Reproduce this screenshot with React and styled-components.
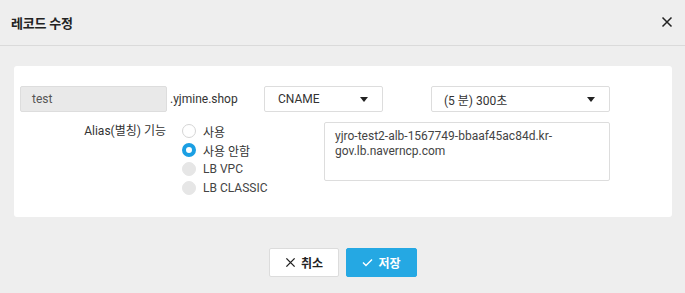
import React, { useState } from "react";
import styled, { createGlobalStyle } from "styled-components";

const Global = createGlobalStyle`
  html, body {
    margin: 0;
    padding: 0;
    background: #eeeeee;
  }
  body {
    font-family: Roboto, "Noto Sans CJK KR", "Noto Sans", sans-serif;
    color: #333;
  }
  * { box-sizing: border-box; }
`;

const Modal = styled.div`
  width: 685px;
  height: 293px;
  background: #eeeeee;
  display: flex;
  flex-direction: column;
`;

const Header = styled.div`
  height: 46px;
  padding: 0 12px 1px 11px;
  border-bottom: 1px solid #dadada;
  display: flex;
  align-items: center;
  justify-content: space-between;
`;

const Title = styled.h2`
  margin: 0;
  font-size: 13px;
  font-weight: 700;
  color: #222;
  letter-spacing: -0.2px;
`;

const CloseBtn = styled.button`
  border: 0;
  background: none;
  padding: 0;
  width: 12px;
  height: 12px;
  display: flex;
  align-items: center;
  justify-content: center;
  cursor: pointer;
`;

const Body = styled.div`
  padding: 20px 13px 0 14px;
`;

const Card = styled.div`
  background: #fff;
  border-radius: 3px;
  height: 151px;
  padding: 20px 6px 0 6px;
  display: flex;
  flex-direction: column;
  gap: 10px;
`;

const Row = styled.div`
  display: flex;
  align-items: ${(p) => p.align || "center"};
`;

const TextInput = styled.div`
  width: 147px;
  height: 26px;
  background: #e9e9e9;
  border: 1px solid #dddddd;
  border-radius: 2px;
  padding-left: 11px;
  font-size: 12px;
  display: flex;
  align-items: center;
  color: #555;
`;

const Suffix = styled.span`
  width: 97px;
  padding-left: 3px;
  font-size: 12px;
  color: #333;
`;

const Select = styled.div`
  width: ${(p) => p.w}px;
  margin-left: ${(p) => p.ml || 0}px;
  height: 26px;
  border: 1px solid #dddddd;
  border-radius: 2px;
  padding: 0 14px 0 ${(p) => p.pl || 12}px;
  font-size: 12px;
  display: flex;
  align-items: center;
  justify-content: space-between;
  color: #333;
`;

const Caret = styled.span`
  width: 0;
  height: 0;
  border-left: 4px solid transparent;
  border-right: 4px solid transparent;
  border-top: 5px solid #222;
`;

const Label = styled.div`
  width: 147px;
  text-align: right;
  padding-right: 1px;
  font-size: 12px;
  line-height: 18px;
  color: #333;
`;

const RadioGroup = styled.div`
  width: 142px;
  margin-left: 15px;
  display: flex;
  flex-direction: column;
  gap: 1px;
`;

const RadioItem = styled.label`
  height: 18px;
  display: flex;
  align-items: center;
  gap: 7px;
  font-size: 12px;
  color: ${(p) => (p.disabled ? "#444" : "#333")};
`;

const Dot = styled.span`
  width: 14px;
  height: 14px;
  border-radius: 50%;
  flex: none;
  background: ${(p) => (p.disabled ? "#e6e6e6" : "#fff")};
  border: ${(p) =>
    p.checked ? "4px solid #1b9fe3" : p.disabled ? "1px solid #e6e6e6" : "1px solid #d5d5d5"};
`;

const TextArea = styled.div`
  width: 286px;
  height: 59px;
  border: 1px solid #dddddd;
  border-radius: 2px;
  padding: 6px 10px;
  font-size: 12px;
  line-height: 15px;
  color: #444;
`;

const Footer = styled.div`
  display: flex;
  justify-content: center;
  gap: 7px;
  padding-top: 31px;
  padding-left: 1px;
`;

const Button = styled.button`
  width: ${(p) => p.w}px;
  height: 29px;
  border-radius: 2px;
  border: 1px solid ${(p) => (p.primary ? "#25a8e3" : "#dcdcdc")};
  background: ${(p) => (p.primary ? "#25a8e3" : "#fff")};
  color: ${(p) => (p.primary ? "#fff" : "#222")};
  font-family: inherit;
  font-size: 12px;
  font-weight: 700;
  display: flex;
  align-items: center;
  justify-content: center;
  gap: 5px;
  padding: 0;
`;

const XIcon = ({ size = 11, color = "#222", w = 1.6 }) => (
  <svg width={size} height={size} viewBox="0 0 12 12">
    <path d="M1.5 1.5 L10.5 10.5 M10.5 1.5 L1.5 10.5" stroke={color} strokeWidth={w} fill="none" />
  </svg>
);

const CheckIcon = () => (
  <svg width="11" height="9" viewBox="0 0 11 9">
    <path d="M1 4.5 L4 7.5 L10 1.5" stroke="#fff" strokeWidth="1.4" fill="none" />
  </svg>
);

const options = [
  { label: "사용" },
  { label: "사용 안함" },
  { label: "LB VPC", disabled: true },
  { label: "LB CLASSIC", disabled: true },
];

export default function App() {
  const [alias, setAlias] = useState(1);
  return (
    <Modal>
      <Global />
      <Header>
        <Title>레코드 수정</Title>
        <CloseBtn>
          <XIcon size={12} color="#222" w={1.5} />
        </CloseBtn>
      </Header>
      <Body>
        <Card>
          <Row>
            <TextInput>test</TextInput>
            <Suffix>.yjmine.shop</Suffix>
            <Select w={119} pl={13}>
              CNAME
              <Caret />
            </Select>
            <Select w={179} ml={48}>
              (5 분) 300초
              <Caret />
            </Select>
          </Row>
          <Row align="flex-start">
            <Label>Alias(별칭) 기능</Label>
            <RadioGroup>
              {options.map((o, i) => (
                <RadioItem
                  key={o.label}
                  disabled={o.disabled}
                  onClick={() => !o.disabled && setAlias(i)}
                >
                  <Dot checked={alias === i} disabled={o.disabled} />
                  {o.label}
                </RadioItem>
              ))}
            </RadioGroup>
            <TextArea>
              yjro-test2-alb-1567749-bbaaf45ac84d.kr-
              <br />
              gov.lb.naverncp.com
            </TextArea>
          </Row>
        </Card>
      </Body>
      <Footer>
        <Button w={70}>
          <XIcon size={11} color="#222" w={1.5} />
          취소
        </Button>
        <Button w={71} primary>
          <CheckIcon />
          저장
        </Button>
      </Footer>
    </Modal>
  );
}
